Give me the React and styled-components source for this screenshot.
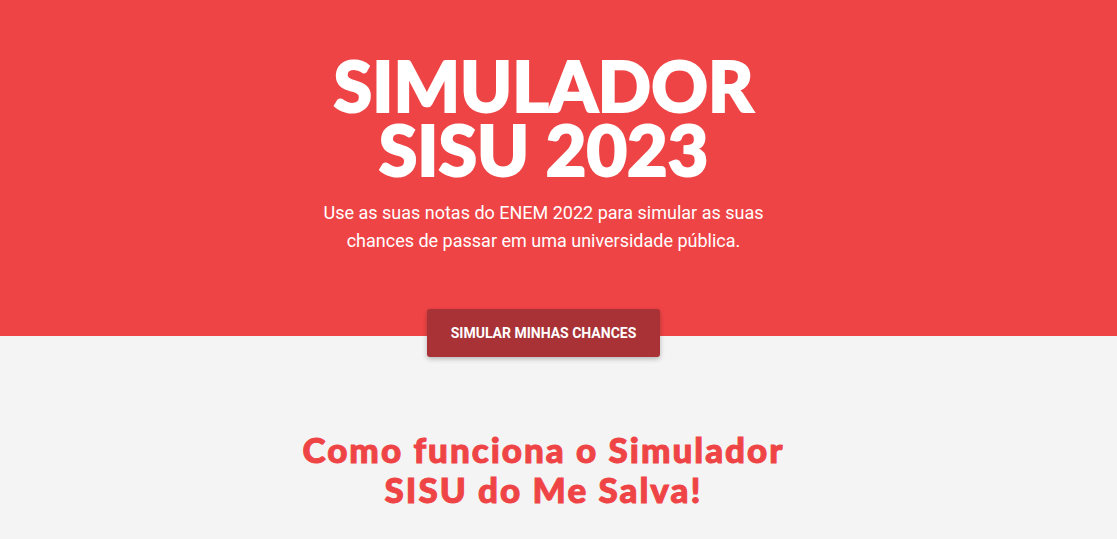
import styled, { createGlobalStyle } from 'styled-components';

const GlobalStyle = createGlobalStyle`
  * { box-sizing: border-box; }
  body {
    margin: 0;
    background: #f4f4f4;
    font-family: Roboto, "Liberation Sans", sans-serif;
  }
`;

const Hero = styled.section`
  background: #ef4446;
  height: 336px;
  display: flex;
  flex-direction: column;
  align-items: center;
  padding: 53px 30px 0 0;
  text-align: center;
`;

const Title = styled.h1`
  margin: 0;
  color: #fff;
  font-family: Lato, sans-serif;
  font-weight: 900;
  font-size: 70px;
  line-height: 64px;
  letter-spacing: 0;
  -webkit-text-stroke: 2px #fff;
`;

const Lead = styled.p`
  margin: 18px 0 0;
  color: #fff;
  font-size: 18px;
  line-height: 28px;
  width: 460px;
`;

const ButtonRow = styled.div`
  display: flex;
  justify-content: center;
  margin-top: -27px;
  padding-right: 30px;
`;

const CtaButton = styled.button`
  border: 0;
  border-radius: 3px;
  background: #a83236;
  color: #fff;
  font-family: Roboto, "Liberation Sans", sans-serif;
  font-weight: 700;
  font-size: 14px;
  text-transform: uppercase;
  width: 233px;
  height: 48px;
  box-shadow: 0 2px 5px rgba(0, 0, 0, 0.25);
  cursor: pointer;
`;

const Section = styled.section`
  padding: 72px 30px 0 0;
  display: flex;
  justify-content: center;
`;

const SectionTitle = styled.h2`
  margin: 0;
  color: #ef4446;
  font-family: Lato, sans-serif;
  font-weight: 900;
  font-size: 35px;
  line-height: 40px;
  letter-spacing: 2px;
  -webkit-text-stroke: 1px #ef4446;
  text-align: center;
  width: 510px;
`;

export default function App() {
  return (
    <>
      <GlobalStyle />
      <Hero>
        <Title>
          SIMULADOR
          <br />
          SISU 2023
        </Title>
        <Lead>
          Use as suas notas do ENEM 2022 para simular as suas chances de passar em uma universidade pública.
        </Lead>
      </Hero>
      <ButtonRow>
        <CtaButton>Simular minhas chances</CtaButton>
      </ButtonRow>
      <Section>
        <SectionTitle>Como funciona o Simulador SISU do Me Salva!</SectionTitle>
      </Section>
    </>
  );
}
